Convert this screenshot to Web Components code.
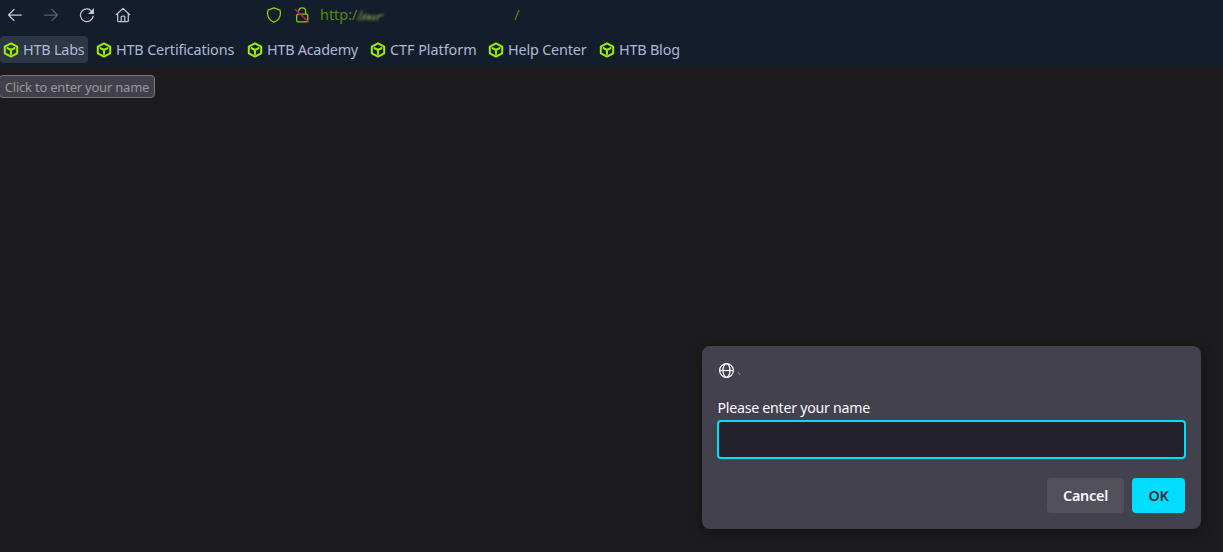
<!DOCTYPE html>
<html lang="en">
<head>
<meta charset="utf-8">
<title>Browser prompt</title>
<style>
html, body { margin: 0; height: 100%; overflow: hidden; background: #1c1b1d; font-family: "Noto Sans", sans-serif; }
</style>
</head>
<body>
<browser-window></browser-window>
<script>
const define = (name, html) => customElements.define(name, class extends HTMLElement {
  constructor() {
    super();
    const t = document.createElement('template');
    t.innerHTML = html;
    this.attachShadow({ mode: 'open' }).append(t.content.cloneNode(true));
  }
});

define('nav-bar', `
<style>
:host { display: flex; align-items: center; height: 30px; padding: 0 0 1px 7px; box-sizing: border-box; background: #141d2b; color: #b9c5df; }
svg { display: block; flex: none; fill: none; stroke: currentColor; stroke-width: 1.25; stroke-linecap: round; stroke-linejoin: round; }
.nav { margin-right: 20px; }
.off { color: #56606f; }
.security { display: flex; gap: 12px; margin-left: 115px; color: #88d20b; }
.url { margin-left: 10px; display: flex; align-items: center; font-size: 14.4px; line-height: 20px; color: #56861b; white-space: pre; }
.smear { stroke-width: 1.3; filter: blur(.8px); }
</style>
<svg class="nav" width="16" height="16"><path d="M14.300 8H1.500M7 2.500 1.500 8 7 13.500"/></svg>
<svg class="nav off" width="16" height="16"><path d="M1.500 8h12.800M9 2.500 14.500 8 9 13.500"/></svg>
<svg class="nav" width="16" height="16"><path d="M14.200 9.200a6.400 6.400 0 1 1-1.600-5.200"/><path d="M15 1v6H9z" fill="currentColor" stroke="none"/></svg>
<svg class="nav" width="16" height="16"><path d="M1.200 7.700 8 1.400l6.800 6.300M2.700 6.500v7.200q0 1 1 1h8.600q1 0 1-1V6.500M6.200 14.500V10q0-1 1-1h1.600q1 0 1 1v4.500"/></svg>
<div class="security">
<svg width="16" height="16"><path d="M8 .8 14 3.200c1.200 5-.4 9.700-6 12-5.600-2.300-7.200-7-6-12z"/></svg>
<svg width="16" height="16"><path d="M4.700 4.200c.2-4.500 6.900-4.500 7 0v2.500M4 7.200h8.500q1.300 0 1.300 1.300v5q0 1.300-1.300 1.300H4q-1.300 0-1.300-1.300v-5Q2.700 7.200 4 7.200"/><path d="m1.500 2.500 12.800 12.300" stroke="#d5164b" stroke-width="1.500"/></svg>
</div>
<div class="url"><span>http:/</span><svg class="smear" width="157" height="20"><path d="m1 15 4-9M4 15l3-5M9 9l-2 6M12 10l-2 4 4-3-2 4M17 10l-2 5M19 11l-2 4M22 10l-2 5M21 11l5-1" stroke="#75964b" opacity=".9"/></svg><span>/</span></div>
`);

define('bookmark-link', `
<style>
:host { display: flex; align-items: center; gap: 4px; height: 27px; width: var(--w); box-sizing: border-box; padding: 0 0 0 3px; border-radius: 4px; font-size: 14.4px; color: #adb9d5; white-space: nowrap; }
:host([active]) { background: #2c3645; }
svg { display: block; flex: none; margin-top: 1px; }
</style>
<svg width="16" height="16" fill="none" stroke="#9fef00" stroke-width="2" stroke-linejoin="round" stroke-linecap="round"><path d="M8 1.400 14.200 4.700v6.600L8 14.600 1.800 11.300V4.700zM4.500 6.100 8 8l3.500-1.900M8 8v4"/></svg>
<slot></slot>
`);

define('bookmark-bar', `
<style>:host { display: flex; align-items: center; gap: 5px; height: 36px; padding: 3px 0 1px; box-sizing: border-box; background: #141d2b; }</style>
<slot></slot>
`);

define('name-button', `
<style>
:host { display: block; }
button { display: block; width: 156px; height: 23px; margin: 0 0 0 -1px; padding: 0; box-sizing: border-box; border: 1px solid #77767b; border-radius: 4px; background: #413f49; color: #98979c; font: 13px/20px "Noto Sans", sans-serif; letter-spacing: -.22px; white-space: nowrap; }
</style>
<button><slot></slot></button>
`);

define('prompt-dialog', `
<style>
:host { display: flex; flex-direction: column; width: 499px; height: 183px; box-sizing: border-box; padding: 17px 16px 16px; border-radius: 8px; background: #43414d; color: #fbfbfe; box-shadow: 0 2px 14px rgba(0,0,0,.3); }
.origin { height: 16px; display: flex; }
svg { display: block; }
.label { margin: 18px 0 0 -.5px; height: 22px; line-height: 22px; font-size: 14.2px; letter-spacing: -.26px; }
input { display: block; width: 469px; height: 39px; margin: 1px 0 0 -1px; flex: none; box-sizing: border-box; border: 2px solid #00ddff; border-radius: 4px; background: #23222b; outline: none; }
.actions { display: flex; justify-content: flex-end; gap: 8px; margin-top: 19px; }
button { height: 35px; border: 0; padding: 0 0 1px; border-radius: 4px; width: 77px; background: #52505b; color: #fbfbfe; font: 600 14.4px "Noto Sans", sans-serif; letter-spacing: -.25px; }
.ok { width: 53px; background: #00ddff; color: #2b2a33; }
</style>
<div class="origin">
<svg width="180" height="18" fill="none" stroke="#fbfbfe" stroke-width="1.250"><circle cx="8.500" cy="7.500" r="6.900"/><ellipse cx="8.500" cy="7.500" rx="3.500" ry="6.900"/><path d="M1.600 7.500h13.800"/><path d="m20 9 2 3" stroke="#8b8992" stroke-width="1"/></svg>
</div>
<div class="label">Please enter your name</div>
<input aria-label="Name">
<div class="actions"><button>Cancel</button><button class="ok">OK</button></div>
`);

define('browser-window', `
<style>
:host { display: flex; flex-direction: column; height: 100%; box-sizing: border-box; }
main { flex: 1; position: relative; background: #1c1b1d; padding-top: 9px; }
prompt-dialog { position: absolute; left: 702px; top: 280px; }
</style>
<nav-bar></nav-bar>
<bookmark-bar>
<bookmark-link active style="--w:88px;letter-spacing:-.2px">HTB Labs</bookmark-link><bookmark-link style="--w:146px;letter-spacing:-.15px">HTB Certifications</bookmark-link><bookmark-link style="--w:118px;letter-spacing:-.25px">HTB Academy</bookmark-link><bookmark-link style="--w:113px;letter-spacing:-.04px">CTF Platform</bookmark-link><bookmark-link style="--w:106px;letter-spacing:-.18px">Help Center</bookmark-link><bookmark-link style="--w:88px;letter-spacing:-.2px">HTB Blog</bookmark-link>
</bookmark-bar>
<main><name-button>Click to enter your name</name-button><prompt-dialog></prompt-dialog></main>
`);
</script>
</body>
</html>
